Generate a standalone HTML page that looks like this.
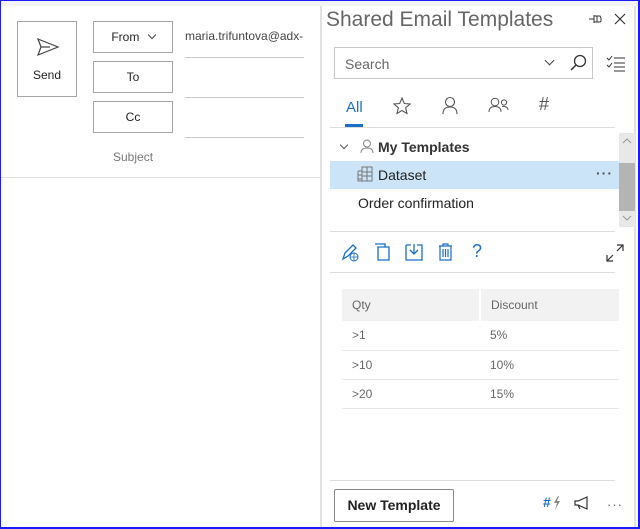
<!DOCTYPE html>
<html><head><style>
*{box-sizing:border-box;margin:0;padding:0}
body{width:640px;height:529px;overflow:hidden;font-family:"Liberation Sans",sans-serif;background:#fff;position:relative}
.frame{position:absolute;left:0;top:0;width:640px;height:529px;border:2px solid #1a1aff;border-width:1px 2px 2px 1px}
.abs{position:absolute}
.btn{position:absolute;border:1px solid #a6a6a6;background:#fff;font-size:12px;color:#222;text-align:center}
.line{position:absolute;height:1px;background:#c8c8c8}
td{font-size:12px;color:#666;height:29px;padding-left:10px;border-bottom:1px solid #e8e8e8}
</style></head><body>
<div class="abs" style="left:1px;top:1px;width:637px;height:5px;background:#f3f3f3"></div>
<!-- left pane -->
<div class="btn" style="left:17px;top:21px;width:60px;height:76px">
<svg class="abs" style="left:18px;top:15px" width="24" height="20" viewBox="0 0 24 20"><path d="M2 2 L22 10 L2 18 L5 10 Z M5 10 H14" fill="none" stroke="#444" stroke-width="1.2"/></svg>
<div class="abs" style="left:0;width:58px;top:46px">Send</div></div>
<div class="btn" style="left:93px;top:21px;width:80px;height:32px;line-height:30px">From <span style="display:inline-block;width:6px;height:6px;border-right:1.3px solid #444;border-bottom:1.3px solid #444;transform:rotate(45deg);margin:0 0 3px 6px"></span></div>
<div class="btn" style="left:93px;top:61px;width:80px;height:32px;line-height:30px">To</div>
<div class="btn" style="left:93px;top:101px;width:80px;height:32px;line-height:30px">Cc</div>
<div class="abs" style="left:185px;top:29px;font-size:12px;color:#444">maria.trifuntova@adx-</div>
<div class="line" style="left:185px;top:57px;width:119px"></div>
<div class="line" style="left:185px;top:97px;width:119px"></div>
<div class="line" style="left:185px;top:137px;width:119px"></div>
<div class="abs" style="left:113px;top:150px;font-size:12px;color:#777">Subject</div>
<div class="abs" style="left:1px;top:177px;width:320px;height:1px;background:#e1e1e1"></div>
<div class="abs" style="left:320px;top:6px;width:2px;height:521px;background:#e1e1e1"></div>
<!-- right pane -->
<div class="abs" style="left:634px;top:6px;width:2px;height:521px;background:#e1e1e1"></div>
<div class="abs" style="left:326px;top:8px;font-size:21px;color:#666">Shared Email Templates</div>
<svg class="abs" style="left:588px;top:12px" width="16" height="14"><path d="M1 7H6 M6 3V11 M6 4H12L13 6V9L12 10H6 M9 4V10" stroke="#333" fill="none" stroke-width="1"/></svg>
<svg class="abs" style="left:614px;top:13px" width="12" height="12"><path d="M1 1L11 11M11 1L1 11" stroke="#333" stroke-width="1.2"/></svg>
<div class="abs" style="left:334px;top:47px;width:259px;height:32px;border:1px solid #c8c8c8"></div>
<div class="abs" style="left:345px;top:56px;font-size:14px;color:#666">Search</div>
<div class="abs" style="left:546px;top:57px;width:7px;height:7px;border-right:1.2px solid #444;border-bottom:1.2px solid #444;transform:rotate(45deg)"></div>
<svg class="abs" style="left:569px;top:54px" width="18" height="18"><circle cx="11" cy="7" r="5.5" fill="none" stroke="#333" stroke-width="1.3"/><path d="M7 11L2 16" stroke="#333" stroke-width="1.5"/></svg>
<svg class="abs" style="left:606px;top:55px" width="20" height="17"><path d="M1 3L3 5L6 1M1 10L3 12L6 8M8 3H19M8 8H19M8 12H19M8 16H19" stroke="#333" fill="none" stroke-width="1"/></svg>
<div class="abs" style="left:346px;top:99px;font-size:15px;color:#1a6fc4">All</div>
<div class="abs" style="left:345px;top:124px;width:18px;height:3px;background:#1a6fc4"></div>
<svg class="abs" style="left:393px;top:97px" width="18" height="18"><path d="M9 1L11.3 6.5L17 7L12.6 10.8L14 16.5L9 13.5L4 16.5L5.4 10.8L1 7L6.7 6.5Z" fill="none" stroke="#555" stroke-width="1.1"/></svg>
<svg class="abs" style="left:442px;top:96px" width="16" height="19"><circle cx="8" cy="6" r="4.5" fill="none" stroke="#555" stroke-width="1.1"/><path d="M1 18C1 13 4 11 8 11S15 13 15 18" fill="none" stroke="#555" stroke-width="1.1"/></svg>
<svg class="abs" style="left:488px;top:97px" width="22" height="16"><circle cx="7" cy="5" r="3.8" fill="none" stroke="#555" stroke-width="1"/><path d="M1 15C1 11 3.5 9.5 7 9.5S13 11 13 15" fill="none" stroke="#555"/><circle cx="16" cy="5.5" r="2.6" fill="none" stroke="#555"/><path d="M14 9.5C17 9 20 10 20 13" fill="none" stroke="#555"/></svg>
<div class="abs" style="left:539px;top:94px;font-size:18px;color:#555">#</div>
<div class="abs" style="left:330px;top:127px;width:285px;height:1px;background:#ddd"></div>
<!-- tree -->
<div class="abs" style="left:341px;top:142px;width:6px;height:6px;border-right:1.2px solid #555;border-bottom:1.2px solid #555;transform:rotate(45deg)"></div>
<svg class="abs" style="left:360px;top:139px" width="14" height="15"><circle cx="7" cy="4.5" r="3.5" fill="none" stroke="#888"/><path d="M1 14C1 10 3.5 9 7 9S13 10 13 14" fill="none" stroke="#888"/></svg>
<div class="abs" style="left:378px;top:139px;font-size:14px;font-weight:bold;color:#333">My Templates</div>
<div class="abs" style="left:330px;top:161px;width:289px;height:28px;background:#cce4f7"></div>
<svg class="abs" style="left:357px;top:166px" width="16" height="16"><path d="M5 1H15V15H5ZM5 6H15M5 10H15M10 1V15M1 5H5M1 9H5M1 13H5M1 5V15H5" fill="none" stroke="#777" stroke-width="1"/></svg>
<div class="abs" style="left:378px;top:167px;font-size:14px;color:#222">Dataset</div>
<div class="abs" style="left:596px;top:165px;font-size:14px;color:#555;letter-spacing:1px;font-weight:bold">···</div>
<div class="abs" style="left:358px;top:195px;font-size:14px;color:#222">Order confirmation</div>
<div class="abs" style="left:619px;top:133px;width:16px;height:94px;background:#e8e8e8"></div>
<div class="abs" style="left:619px;top:163px;width:16px;height:48px;background:#b4b4b4"></div>
<svg class="abs" style="left:621px;top:137px" width="12" height="8"><path d="M2 6L6 2L10 6" fill="none" stroke="#999"/></svg>
<svg class="abs" style="left:621px;top:214px" width="12" height="8"><path d="M2 2L6 6L10 2" fill="none" stroke="#999"/></svg>
<div class="abs" style="left:330px;top:231px;width:285px;height:1px;background:#ddd"></div>
<!-- toolbar -->
<svg class="abs" style="left:340px;top:242px" width="20" height="20"><path d="M3 17L5 11L13 3L16 6L8 14Z" fill="none" stroke="#1a6fc4" stroke-width="1.3"/><circle cx="14" cy="15" r="4" fill="#fff" stroke="#1a6fc4"/><path d="M10 15H18M14 11V19" stroke="#1a6fc4" stroke-width=".8"/></svg>
<svg class="abs" style="left:374px;top:243px" width="16" height="18"><path d="M1 1H11V4M4 4H15V17H4Z" fill="none" stroke="#1a6fc4" stroke-width="1.3"/></svg>
<svg class="abs" style="left:405px;top:243px" width="18" height="18"><path d="M1 2H6M12 2H17V17H1V2M9 1V11M5 7L9 11L13 7" fill="none" stroke="#1a6fc4" stroke-width="1.3"/></svg>
<svg class="abs" style="left:438px;top:243px" width="15" height="18"><path d="M1 3H14M5 3V1H10V3M2 3V17H13V3M5 6V14M7.5 6V14M10 6V14" fill="none" stroke="#1a6fc4" stroke-width="1.2"/></svg>
<div class="abs" style="left:472px;top:241px;font-size:18px;color:#1a6fc4">?</div>
<svg class="abs" style="left:606px;top:244px" width="18" height="18"><path d="M11 1H17V7M17 1L11 7M1 11V17H7M1 17L7 11" fill="none" stroke="#333" stroke-width="1.2"/></svg>
<div class="abs" style="left:330px;top:272px;width:285px;height:1px;background:#ddd"></div>
<!-- table -->
<table class="abs" style="left:342px;top:289px;width:277px;border-collapse:collapse">
<tr style="background:#f2f2f2"><td style="width:138px;height:32px;border-right:2px solid #fff;border-bottom:none">Qty</td><td style="border-bottom:none">Discount</td></tr>
<tr><td>&gt;1</td><td>5%</td></tr>
<tr><td>&gt;10</td><td>10%</td></tr>
<tr><td>&gt;20</td><td>15%</td></tr>
</table>
<div class="abs" style="left:330px;top:480px;width:285px;height:1px;background:#ddd"></div>
<div class="abs" style="left:334px;top:489px;width:120px;height:33px;border:1px solid #8a8a8a;border-radius:2px;font-size:14px;font-weight:bold;color:#222;text-align:center;line-height:31px">New Template</div>
<div class="abs" style="left:543px;top:494px;font-size:14px;color:#1a6fc4;font-weight:bold">#</div>
<svg class="abs" style="left:553px;top:496px" width="8" height="14"><path d="M5 0L1 7H4L2 14L7 5H4L6 0Z" fill="#888"/></svg>
<svg class="abs" style="left:574px;top:496px" width="18" height="14"><path d="M1 5H4L13 1V13L4 9H1ZM4 9L6 13" fill="none" stroke="#333" stroke-width="1.2"/></svg>
<div class="abs" style="left:607px;top:497px;font-size:13px;color:#666;letter-spacing:1px">···</div>
<div class="frame"></div>
</body></html>
